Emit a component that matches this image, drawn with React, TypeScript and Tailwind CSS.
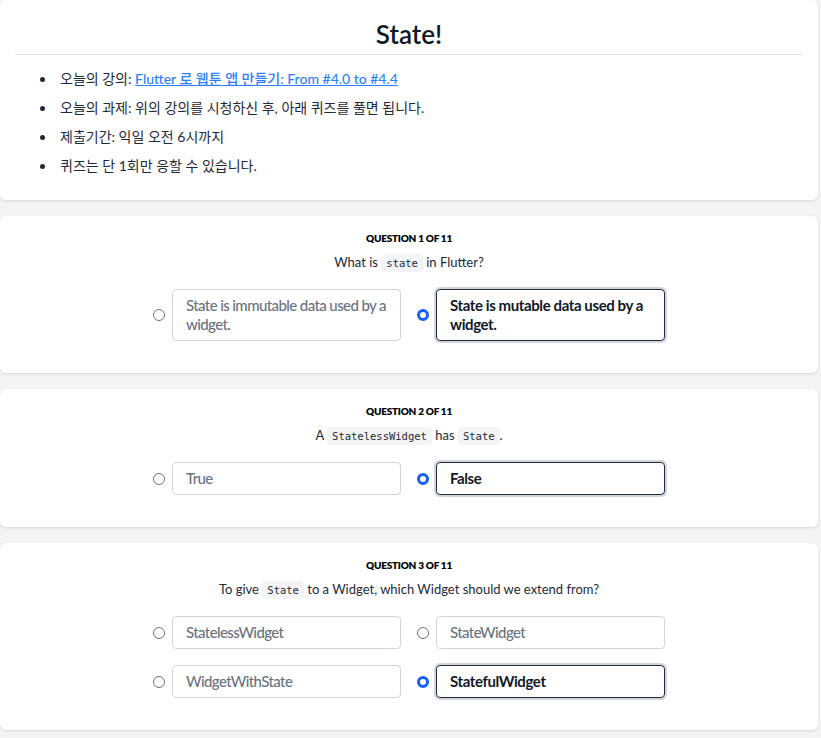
import React from "react";

type Part = string | { code: string };

type Question = {
  prompt: Part[];
  options: string[];
  picked: number;
};

const questions: Question[] = [
  {
    prompt: ["What is ", { code: "state" }, " in Flutter?"],
    options: ["State is immutable data used by a widget.", "State is mutable data used by a widget."],
    picked: 1,
  },
  {
    prompt: ["A ", { code: "StatelessWidget" }, " has ", { code: "State" }, "."],
    options: ["True", "False"],
    picked: 1,
  },
  {
    prompt: ["To give ", { code: "State" }, " to a Widget, which Widget should we extend from?"],
    options: ["StatelessWidget", "StateWidget", "WidgetWithState", "StatefulWidget"],
    picked: 3,
  },
];

const sans = "font-['Lato','Noto_Sans_CJK_KR',sans-serif]";

const notes = [
  "오늘의 과제: 위의 강의를 시청하신 후, 아래 퀴즈를 풀면 됩니다.",
  "제출기간: 익일 오전 6시까지",
  "퀴즈는 단 1회만 응할 수 있습니다.",
];

function Radio({ checked }: { checked: boolean }) {
  return checked ? (
    <span className="w-3 h-3 shrink-0 rounded-full border-[3.5px] border-blue-600 bg-white" />
  ) : (
    <span className="w-3 h-3 shrink-0 rounded-full border border-gray-500 bg-white" />
  );
}

function QuestionCard({ q, index }: { q: Question; index: number }) {
  return (
    <div className="bg-white rounded-md shadow-[0_1px_3px_rgba(0,0,0,0.12)] pt-4 pb-8">
      <div className="text-center text-[10px] leading-[12px] font-extrabold uppercase text-black tracking-tight">
        Question {index + 1} of 11
      </div>
      <div className="mt-2 text-center text-[13px] leading-[20px] text-gray-800">
        {q.prompt.map((p, i) =>
          typeof p === "string" ? (
            <span key={i}>{p}</span>
          ) : (
            <code
              key={i}
              className="font-['DejaVu_Sans_Mono',monospace] text-[10.5px] bg-gray-100 rounded px-[5px] py-[3px] text-gray-800"
            >
              {p.code}
            </code>
          )
        )}
      </div>
      <div className="mt-4 mx-auto w-[512px] grid grid-cols-2 gap-x-4 gap-y-4">
        {q.options.map((opt, i) => {
          const on = i === q.picked;
          return (
            <div key={i} className="flex items-center gap-[7px]">
              <Radio checked={on} />
              <div
                className={
                  on
                    ? "flex-1 rounded-[4px] border border-gray-800 ring-2 ring-gray-300 pl-[13px] pr-2 py-1.5 text-[15px] leading-[19px] tracking-[-0.4px] font-bold text-gray-900"
                    : "flex-1 rounded-[4px] border border-gray-300 pl-[13px] pr-2 py-1.5 text-[15px] leading-[19px] tracking-[-0.6px] font-medium text-gray-500"
                }
              >
                {opt}
              </div>
            </div>
          );
        })}
      </div>
    </div>
  );
}

export default function App() {
  return (
    <div className={`min-h-screen bg-gray-100 ${sans}`}>
      <div className="w-[818px] flex flex-col gap-4 pb-4">
        {/* Intro card */}
        <div className="bg-white rounded-md shadow-[0_1px_3px_rgba(0,0,0,0.12)] pt-[18px] pb-[24px]">
          <h1 className="text-center text-[26px] leading-[32px] font-semibold text-gray-900">State!</h1>
          <div className="mx-[15px] mt-1 border-t border-gray-200" />
          <ul className="mt-[14px] flex flex-col gap-[9px] text-[14px] leading-[20px] text-gray-800">
            <li className="flex items-center">
              <span className="w-[5px] h-[5px] rounded-full bg-gray-800 ml-10 mr-[15px]" />
              <span>
                오늘의 강의:{" "}
                <a href="#" className="text-blue-500 underline font-medium">
                  Flutter 로 웹툰 앱 만들기: From #4.0 to #4.4
                </a>
              </span>
            </li>
            {notes.map((n) => (
              <li key={n} className="flex items-center">
                <span className="w-[5px] h-[5px] rounded-full bg-gray-800 ml-10 mr-[15px]" />
                <span>{n}</span>
              </li>
            ))}
          </ul>
        </div>

        {questions.map((q, i) => (
          <QuestionCard key={i} q={q} index={i} />
        ))}
      </div>
    </div>
  );
}
